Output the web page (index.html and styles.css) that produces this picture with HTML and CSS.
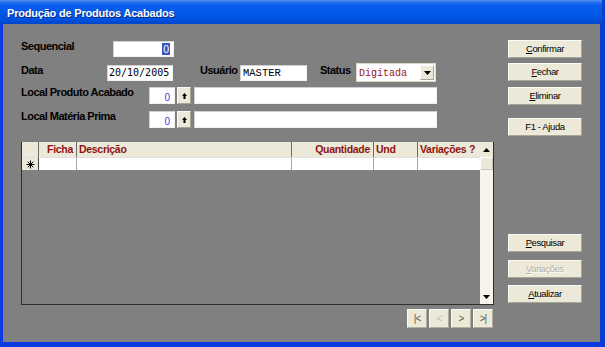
FILE: index.html
```html
<!DOCTYPE html>
<html lang="pt">
<head>
    <meta charset="UTF-8">
    <title>Produção de Produtos Acabados</title>
    <link rel="stylesheet" href="styles.css">
</head>
<body>
    <div class="window">
        <div class="titlebar">Produção de Produtos Acabados</div>
        <div class="client">
            <div class="main">
                <div class="row r1">
                    <span class="lbl l-seq">Sequencial</span>
                    <div class="field f-seq"><span class="sel">0</span></div>
                </div>
                <div class="row r2">
                    <span class="lbl l-data">Data</span>
                    <div class="field f-data">20/10/2005</div>
                    <span class="lbl l-user">Usuário</span>
                    <div class="field f-user">MASTER</div>
                    <span class="lbl l-status">Status</span>
                    <div class="combo">
                        <span class="combo-text">Digitada</span>
                        <span class="combo-btn"><svg width="7" height="4" viewBox="0 0 7 4"><path d="M0 0h7L3.5 4z" fill="#000"/></svg></span>
                    </div>
                </div>
                <div class="row r3">
                    <span class="lbl l-local">Local Produto Acabado</span>
                    <div class="field f-code">0</div>
                    <div class="pick"><svg width="5" height="6" viewBox="0 0 5 6"><path d="M2.5 0L5 3H3.5V6H1.5V3H0z" fill="#000"/></svg></div>
                    <div class="field f-name"></div>
                </div>
                <div class="row r4">
                    <span class="lbl l-local">Local Matéria Prima</span>
                    <div class="field f-code">0</div>
                    <div class="pick"><svg width="5" height="6" viewBox="0 0 5 6"><path d="M2.5 0L5 3H3.5V6H1.5V3H0z" fill="#000"/></svg></div>
                    <div class="field f-name"></div>
                </div>

                <div class="grid">
                    <div class="gtable">
                        <div class="ghead">
                            <span class="gh"></span>
                            <span class="gh right">Ficha</span>
                            <span class="gh">Descrição</span>
                            <span class="gh right">Quantidade</span>
                            <span class="gh">Und</span>
                            <span class="gh">Variações ?</span>
                        </div>
                        <div class="grow">
                            <span class="gc ind">
                                <svg width="9" height="9" viewBox="0 0 9 9"><path d="M4.5 0.5V8.5M0.5 4.5H8.5M1.7 1.7L7.3 7.3M7.3 1.7L1.7 7.3" stroke="#000" stroke-width="1"/></svg>
                            </span>
                            <span class="gc"></span>
                            <span class="gc"></span>
                            <span class="gc"></span>
                            <span class="gc"></span>
                            <span class="gc"></span>
                        </div>
                    </div>
                    <div class="vscroll">
                        <div class="sb-btn"><svg width="7" height="4" viewBox="0 0 7 4"><path d="M3.5 0L7 4H0z" fill="#000"/></svg></div>
                        <div class="sb-track"><div class="sb-thumb"></div></div>
                        <div class="sb-btn"><svg width="7" height="4" viewBox="0 0 7 4"><path d="M0 0h7L3.5 4z" fill="#000"/></svg></div>
                    </div>
                </div>

                <div class="nav">
                    <div class="nbtn">|&lt;</div>
                    <div class="nbtn off">&lt;</div>
                    <div class="nbtn">&gt;</div>
                    <div class="nbtn">&gt;|</div>
                </div>
            </div>

            <div class="side">
                <div class="btn"><u>C</u>onfirmar</div>
                <div class="btn b-fechar"><u>F</u>echar</div>
                <div class="btn b-elim"><u>E</u>liminar</div>
                <div class="btn b-ajuda">F1 - Ajuda</div>
                <div class="btn b-pesq"><u>P</u>esquisar</div>
                <div class="btn b-var off"><u>V</u>ariações</div>
                <div class="btn b-atu"><u>A</u>tualizar</div>
            </div>
        </div>
    </div>
</body>
</html>
```

FILE: styles.css
```css
body {
    margin: 0;
    background: #808080;
    font-family: 'Liberation Sans', Arial, sans-serif;
}
.window {
    width: 605px;
    height: 347px;
    display: flex;
    flex-direction: column;
}
.titlebar {
    height: 24px;
    flex: none;
    box-sizing: border-box;
    padding: 7px 0 0 7px;
    line-height: 13px;
    font-size: 11px;
    font-weight: bold;
    letter-spacing: -0.2px;
    color: #fff;
    text-shadow: 1px 1px 0 #0b2a8a;
    background: linear-gradient(#5b95f3 0, #2a72f0 2px, #0a5ef0 5px, #0058e8 14px, #004fda 21px, #0045c8 24px);
    border-right: 3px solid #0a3ec8;
}
.client {
    flex: 1;
    display: flex;
    box-sizing: border-box;
    padding: 17px 0 0 18px;
    background: #808080;
    border-left: 3px solid #0b3be2;
    border-right: 5px solid #0a3ad0;
    border-bottom: 5px solid #0b3ae0;
}
.main {
    width: 473px;
}

/* form rows */
.row {
    display: flex;
    align-items: flex-start;
}
.r2 { margin-top: 6px; }
.r3 { margin-top: 5px; }
.r4 { margin-top: 7px; }
.lbl {
    flex: none;
    font-size: 11px;
    font-weight: bold;
    letter-spacing: -0.5px;
    line-height: 12px;
    color: #000;
    margin-top: -1px;
    white-space: nowrap;
}
.r2 .lbl { margin-top: 1px; }
.l-seq { width: 92px; }
.l-data { width: 86px; }
.l-user { width: 40px; margin-left: 27px; }
.l-status { width: 36px; margin-left: 13px; }
.l-local { width: 128px; }

.field {
    flex: none;
    box-sizing: border-box;
    background: #fff;
    border: 1px solid;
    border-color: #d0d0d0 #f2f2f2 #f2f2f2 #d0d0d0;
}
.f-seq {
    width: 61px;
    height: 16px;
    display: flex;
    justify-content: flex-end;
    align-items: center;
    padding-right: 3px;
}
.sel {
    background: #3556c4;
    color: #fff;
    font-size: 10.5px;
    line-height: 12px;
    padding: 0 1px;
}
.f-data {
    width: 66px;
    height: 16px;
    margin-top: 2px;
    padding-left: 1px;
    font-family: 'DejaVu Sans Mono', monospace;
    font-size: 10px;
    line-height: 14px;
    color: #000;
}
.f-user {
    width: 67px;
    height: 16px;
    margin-top: 2px;
    padding-left: 2px;
    font-family: 'Liberation Mono', monospace;
    font-size: 10.5px;
    line-height: 15px;
    color: #000;
}
.combo {
    flex: none;
    width: 80px;
    height: 19px;
    box-sizing: border-box;
    background: #fff;
    border: 1px solid #dcd8c8;
    display: flex;
    align-items: center;
    justify-content: space-between;
    padding: 1px;
}
.combo-text {
    font-family: 'Liberation Mono', monospace;
    font-size: 10px;
    color: #9a1414;
    padding-left: 1px;
    padding-top: 2px;
}
.combo-btn {
    width: 14px;
    height: 15px;
    background: #ece9d8;
    border: 1px solid;
    border-color: #fff #a6a394 #a6a394 #fff;
    box-sizing: border-box;
    display: flex;
    align-items: center;
    justify-content: center;
}
.f-code {
    width: 26px;
    height: 17px;
    text-align: right;
    padding: 4px 4px 0 0;
    font-size: 10px;
    line-height: 12px;
    color: #3040d8;
}
.pick {
    flex: none;
    width: 14px;
    height: 17px;
    margin-left: 2px;
    box-sizing: border-box;
    background: #ece9d8;
    border: 1px solid;
    border-color: #fbfaf5 #a8a596 #a8a596 #fbfaf5;
    display: flex;
    align-items: center;
    justify-content: center;
}
.f-name {
    width: 243px;
    height: 17px;
    margin-left: 3px;
}

/* data grid */
.grid {
    margin-top: 14px;
    height: 163px;
    box-sizing: border-box;
    display: flex;
    border: 1px solid #2e2e2e;
    border-top: none;
    background: #808080;
}
.gtable {
    width: 458px;
}
.ghead, .grow {
    display: grid;
    grid-template-columns: 17px 38px 215px 82px 44px 62px;
}
.ghead {
    height: 15px;
    background: #ece9d8;
}
.gh {
    box-sizing: border-box;
    border-right: 1px solid #6c6c6c;
    padding: 0 2px;
    font-size: 10.5px;
    font-weight: bold;
    letter-spacing: -0.3px;
    line-height: 15px;
    color: #8e1212;
    white-space: nowrap;
}
.gh.right {
    text-align: right;
    padding-right: 3px;
}
.gh:last-child {
    border-right: none;
}
.grow {
    height: 13px;
    background: #fff;
}
.gc {
    box-sizing: border-box;
    border-right: 1px solid #a8a8a8;
    border-top: 1px solid #e0e0e0;
}
.gc:last-child {
    border-right: none;
}
.gc.ind {
    background: #ece9d8;
    border-right-color: #404040;
    display: flex;
    align-items: center;
    justify-content: center;
}
.vscroll {
    width: 13px;
    display: flex;
    flex-direction: column;
    background: #f6f4ec;
}
.sb-btn {
    height: 15px;
    flex: none;
    background: #ece9d8;
    display: flex;
    align-items: center;
    justify-content: center;
}
.sb-btn:last-child {
    background: #f6f4ec;
}
.sb-track {
    flex: 1;
}
.sb-thumb {
    height: 13px;
    box-sizing: border-box;
    background: #ece9d8;
    border: 1px solid;
    border-color: #fff #c8c5b6 #c8c5b6 #fff;
}

/* record navigation */
.nav {
    display: flex;
    justify-content: flex-end;
    gap: 2px;
    margin-top: 4px;
    padding-right: 1px;
}
.nbtn {
    width: 20px;
    height: 19px;
    box-sizing: border-box;
    background: #ece9d8;
    border: 1px solid;
    border-color: #fbfaf5 #b0ad9e #b0ad9e #fbfaf5;
    text-align: center;
    font-size: 10px;
    letter-spacing: -1px;
    line-height: 17px;
    color: #5a5a5a;
}
.nbtn.off {
    color: #c4c1b2;
}

/* right-hand buttons */
.side {
    width: 74px;
    margin-left: 14px;
    margin-top: -1px;
    display: flex;
    flex-direction: column;
}
.btn {
    height: 18px;
    box-sizing: border-box;
    background: #ece9d8;
    border: 1px solid;
    border-color: #fbfaf5 #a8a596 #a8a596 #fbfaf5;
    text-align: center;
    font-size: 9.5px;
    letter-spacing: -0.4px;
    line-height: 16px;
    color: #000;
}
.btn u {
    text-underline-offset: 1px;
}
.b-fechar { margin-top: 5px; }
.b-elim { margin-top: 6px; }
.b-ajuda { margin-top: 13px; }
.b-pesq { margin-top: 98px; }
.b-var { margin-top: 8px; }
.b-atu { margin-top: 7px; }
.btn.off {
    color: #b4b1a3;
    text-shadow: 1px 1px 0 #fff;
}
```
